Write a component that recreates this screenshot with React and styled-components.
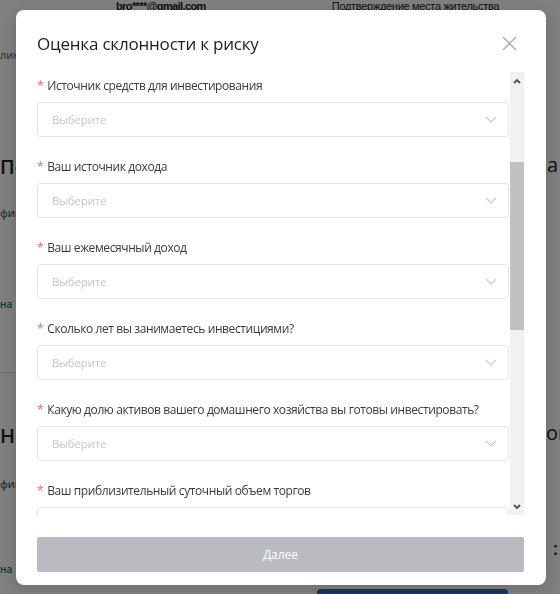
import React from "react";
import styled, { createGlobalStyle } from "styled-components";

const GlobalStyle = createGlobalStyle`
  html, body { margin: 0; padding: 0; }
  body {
    font-family: "Open Sans", "Noto Sans", "Liberation Sans", sans-serif;
    background: #fff;
  }
  * { box-sizing: border-box; }
`;

/* ---------- background page ---------- */
const BgPage = styled.div`
  width: 560px;
  height: 594px;
  overflow: hidden;
  background: #ffffff;
  display: flex;
  flex-direction: column;
`;

const TopBar = styled.div`
  height: 12px;
  display: flex;
  align-items: flex-end;
  font-family: "Liberation Sans", Arial, sans-serif;
  font-size: 11px;
  line-height: 12px;
  color: #222;
  white-space: nowrap;
`;

const TopText = styled.span`
  margin-left: ${(p) => p.$ml}px;
  font-weight: ${(p) => (p.$bold ? 700 : 400)};
  letter-spacing: ${(p) => (p.$bold ? "-0.6px" : "-0.3px")};
`;

const BgBody = styled.div`
  flex: 1;
  display: grid;
  grid-template-columns: 16px 1fr 14px;
`;

const SideCol = styled.div`
  display: flex;
  flex-direction: column;
  overflow: hidden;
  white-space: nowrap;
`;

const Frag = styled.div`
  margin-top: ${(p) => p.$mt}px;
  height: ${(p) => p.$h}px;
  line-height: ${(p) => p.$h}px;
  font-size: ${(p) => p.$size}px;
  font-weight: ${(p) => p.$w || 400};
  color: ${(p) => p.$color || "#333"};
  margin-left: ${(p) => p.$ml || 0}px;
`;

const Divider = styled.div`
  margin-top: ${(p) => p.$mt}px;
  height: 1px;
  background: #d8d8d8;
`;

const MidCol = styled.div`
  display: flex;
  flex-direction: column;
  justify-content: flex-end;
`;

const BlueBtn = styled.div`
  margin-left: 301px;
  width: 191px;
  height: 6px;
  margin-bottom: -1px;
  background: #2f63d8;
  border-radius: 4px 4px 0 0;
`;

/* ---------- overlay + modal ---------- */
const Mask = styled.div`
  position: fixed;
  inset: 0;
  background: rgba(0, 0, 0, 0.5);
`;

const Modal = styled.div`
  position: fixed;
  left: 16px;
  top: 10px;
  width: 530px;
  height: 575px;
  background: #fff;
  border-radius: 8px;
  box-shadow: 0 4px 16px rgba(0, 0, 0, 0.15);
  display: flex;
  flex-direction: column;
  padding: 20px 22px 13px 21px;
`;

const Header = styled.div`
  height: 26px;
  display: flex;
  align-items: center;
  justify-content: space-between;
`;

const Title = styled.h2`
  margin: 0;
  font-size: 17px;
  font-weight: 400;
  letter-spacing: -0.2px;
  color: #1e1e1e;
`;

const CloseBtn = styled.button`
  border: 0;
  background: none;
  padding: 0;
  margin-right: 7px;
  width: 15px;
  height: 15px;
  display: flex;
  cursor: pointer;
`;

const Body = styled.div`
  margin-top: 16px;
  height: 443px;
  display: flex;
  gap: 1px;
`;

const Content = styled.div`
  flex: 1;
  overflow: hidden;
  padding-top: 4px;
`;

const FormItem = styled.div`
  margin-bottom: 20px;
`;

const Label = styled.div`
  display: flex;
  align-items: center;
  height: 18px;
  margin-bottom: 8px;
  font-size: 12px;
  letter-spacing: -0.4px;
  color: #3a3a3a;
  white-space: nowrap;
`;

const Req = styled.span`
  color: #e5637b;
  margin-right: 4px;
  font-size: 12px;
`;

const Select = styled.div`
  height: 35px;
  border: 1px solid #e4e4e4;
  border-radius: 4px;
  display: flex;
  align-items: center;
  justify-content: space-between;
  padding: 0 11px 0 14px;
`;

const Placeholder = styled.span`
  font-size: 11.5px;
  letter-spacing: -0.2px;
  color: #c7c7c7;
`;

const ScrollBar = styled.div`
  width: 14px;
  background: #f1f1f1;
  display: flex;
  flex-direction: column;
`;

const ArrowBtn = styled.div`
  height: 17px;
  display: flex;
  align-items: center;
  justify-content: center;
`;

const Track = styled.div`
  flex: 1;
  padding-top: ${(p) => p.$offset}px;
`;

const Thumb = styled.div`
  height: ${(p) => p.$h}px;
  background: #c1c1c1;
`;

const Footer = styled.div`
  margin-top: 22px;
`;

const NextBtn = styled.button`
  width: 100%;
  height: 35px;
  border: 0;
  border-radius: 2px;
  background: #babbc1;
  color: #fff;
  font-family: inherit;
  font-size: 12px;
`;

const Chevron = () => (
  <svg width="12" height="7" viewBox="0 0 12 7">
    <path d="M1 1l5 5 5-5" fill="none" stroke="#c9c9c9" strokeWidth="1.1" />
  </svg>
);

const ArrowIcon = ({ up }) => (
  <svg width="8" height="6" viewBox="0 0 8 6">
    <path
      d={up ? "M1 5l3-3 3 3" : "M1 1l3 3 3-3"}
      fill="none"
      stroke="#505050"
      strokeWidth="1.8"
    />
  </svg>
);

const fields = [
  "Источник средств для инвестирования",
  "Ваш источник дохода",
  "Ваш ежемесячный доход",
  "Сколько лет вы занимаетесь инвестициями?",
  "Какую долю активов вашего домашнего хозяйства вы готовы инвестировать?",
  "Ваш приблизительный суточный объем торгов",
];

export default function App() {
  return (
    <>
      <GlobalStyle />
      <BgPage>
        <TopBar>
          <TopText $ml={116} $bold>bro****@gmail.com</TopText>
          <TopText $ml={126}>Подтверждение места жительства</TopText>
        </TopBar>
        <BgBody>
          <SideCol>
            <Frag $mt={36} $h={14} $size={11} $color="#555">линия</Frag>
            <Frag $mt={92} $h={26} $size={20} $w={600} $color="#222">Подтверждение</Frag>
            <Frag $mt={26} $h={14} $size={11} $color="#333">фикация</Frag>
            <Frag $mt={77} $h={14} $size={10} $w={600} $color="#0c7a4e">на</Frag>
            <Divider $mt={61} />
            <Frag $mt={50} $h={26} $size={20} $w={600} $color="#222">Нов</Frag>
            <Frag $mt={28} $h={14} $size={11} $color="#333">фикация</Frag>
            <Frag $mt={71} $h={14} $size={10} $w={600} $color="#0c7a4e">на</Frag>
          </SideCol>
          <MidCol>
            <BlueBtn />
          </MidCol>
          <SideCol>
            <Frag $mt={140} $h={26} $size={20} $w={400} $color="#222" $ml={1}>а</Frag>
            <Frag $mt={242} $h={26} $size={20} $w={400} $color="#222">ог</Frag>
            <Frag $mt={89} $h={26} $size={18} $w={600} $color="#222" $ml={7}>:</Frag>
          </SideCol>
        </BgBody>
      </BgPage>

      <Mask />
      <Modal>
        <Header>
          <Title>Оценка склонности к риску</Title>
          <CloseBtn aria-label="close">
            <svg width="15" height="15" viewBox="0 0 15 15">
              <path d="M1 1l13 13M14 1L1 14" stroke="#a9a9a9" strokeWidth="1.3" />
            </svg>
          </CloseBtn>
        </Header>
        <Body>
          <Content>
            {fields.map((f) => (
              <FormItem key={f}>
                <Label>
                  <Req>*</Req>
                  {f}
                </Label>
                <Select>
                  <Placeholder>Выберите</Placeholder>
                  <Chevron />
                </Select>
              </FormItem>
            ))}
          </Content>
          <ScrollBar>
            <ArrowBtn>
              <ArrowIcon up />
            </ArrowBtn>
            <Track $offset={73}>
              <Thumb $h={168} />
            </Track>
            <ArrowBtn>
              <ArrowIcon />
            </ArrowBtn>
          </ScrollBar>
        </Body>
        <Footer>
          <NextBtn>Далее</NextBtn>
        </Footer>
      </Modal>
    </>
  );
}
